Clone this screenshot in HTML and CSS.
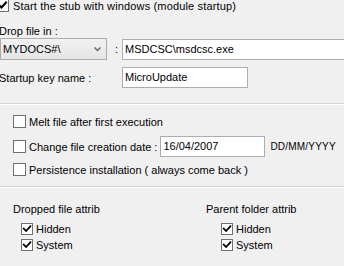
FILE: index.html
```html
<!DOCTYPE html>
<html>
<head>
<meta charset="utf-8">
<link rel="stylesheet" href="styles.css">
</head>
<body>
<div class="panel">
  <div class="row top-row">
    <span class="cb-clip"><span class="cb checked"><svg viewBox="0 0 11 11" width="11" height="11"><path d="M2 5 L4.5 7.5 L9 2.5" /></svg></span></span>
    <span class="lbl">Start the stub with windows (module startup)</span>
  </div>
  <div class="field-label drop-label">Drop file in :</div>
  <div class="row combo-row">
    <div class="combo"><span>MYDOCS#\</span><svg class="arrow" viewBox="0 0 7 5" width="7" height="5"><path d="M0.5 0.5 L3.5 3.5 L6.5 0.5" /></svg></div>
    <span class="colon">:</span>
    <div class="tb tb-path">MSDCSC\msdcsc.exe</div>
  </div>
  <div class="row key-row">
    <span class="key-label">Startup key name :</span>
    <div class="tb tb-key">MicroUpdate</div>
  </div>
  <div class="sep sep1"></div>
  <div class="options">
    <div class="row opt-row">
      <span class="cb"></span><span class="lbl">Melt file after first execution</span>
    </div>
    <div class="row opt-row date-row">
      <span class="cb"></span><span class="lbl">Change file creation date :</span>
      <div class="tb tb-date">16/04/2007</div>
      <span class="fmt">DD/MM/YYYY</span>
    </div>
    <div class="row opt-row">
      <span class="cb"></span><span class="lbl">Persistence installation ( always come back )</span>
    </div>
  </div>
  <div class="sep sep2"></div>
  <div class="attribs">
    <div class="group group-left">
      <div class="group-title">Dropped file attrib</div>
      <div class="row attr-row"><span class="cb small checked"><svg viewBox="0 0 10 10" width="10" height="10"><path d="M1.8 4.6 L4 7 L8.4 2.2" /></svg></span><span class="lbl">Hidden</span></div>
      <div class="row attr-row"><span class="cb small checked"><svg viewBox="0 0 10 10" width="10" height="10"><path d="M1.8 4.6 L4 7 L8.4 2.2" /></svg></span><span class="lbl">System</span></div>
    </div>
    <div class="group group-right">
      <div class="group-title">Parent folder attrib</div>
      <div class="row attr-row"><span class="cb small checked"><svg viewBox="0 0 10 10" width="10" height="10"><path d="M1.8 4.6 L4 7 L8.4 2.2" /></svg></span><span class="lbl">Hidden</span></div>
      <div class="row attr-row"><span class="cb small checked"><svg viewBox="0 0 10 10" width="10" height="10"><path d="M1.8 4.6 L4 7 L8.4 2.2" /></svg></span><span class="lbl">System</span></div>
    </div>
  </div>
</div>
</body>
</html>
```
FILE: styles.css
```css
html, body {
  margin: 0;
  padding: 0;
  background: #f0f0f0;
  overflow: hidden;
}
body {
  width: 344px;
  height: 266px;
  font-family: "Liberation Sans", Arial, sans-serif;
  font-size: 11px;
  color: #000;
}
.panel {
  display: flex;
  flex-direction: column;
}
.row {
  display: flex;
  align-items: center;
}
.cb {
  box-sizing: border-box;
  width: 13px;
  height: 13px;
  border: 1px solid #707070;
  background: #fff;
  display: flex;
  align-items: center;
  justify-content: center;
  flex: none;
}
.cb.small {
  width: 12px;
  height: 12px;
}
.cb svg path {
  fill: none;
  stroke: #000;
  stroke-width: 2;
  stroke-linecap: square;
}
.cb.small svg path {
  stroke-width: 1.8;
}
.cb-clip {
  flex: none;
  width: 9px;
  height: 12px;
  overflow: hidden;
  display: flex;
  justify-content: flex-end;
  align-items: flex-end;
}
.lbl {
  margin-left: 3px;
  white-space: nowrap;
}
.top-row {
  height: 12px;
}
.top-row .lbl {
  margin-left: 4px;
  letter-spacing: 0.15px;
}
.drop-label {
  margin-top: 12px;
  height: 14px;
  line-height: 14px;
  text-indent: -1px;
}
.combo-row {
  height: 22px;
}
.combo {
  box-sizing: border-box;
  flex: none;
  width: 107px;
  height: 22px;
  border: 1px solid #acacac;
  background: linear-gradient(#f2f2f2, #e5e5e5);
  display: flex;
  align-items: center;
  justify-content: space-between;
  padding: 0 5px 0 2px;
}
.arrow path {
  fill: none;
  stroke: #666;
  stroke-width: 1.5;
}
.colon {
  flex: none;
  margin-left: 8px;
  width: 7px;
}
.tb {
  box-sizing: border-box;
  height: 21px;
  border: 1px solid #abadb3;
  background: #fff;
  padding: 0 2px;
  line-height: 19px;
  white-space: nowrap;
  flex: none;
}
.tb-path {
  flex: 1;
  border-right: none;
}
.key-row {
  margin-top: 7px;
  height: 21px;
}
.key-label {
  flex: none;
  width: 122px;
  text-indent: -1px;
}
.tb-key {
  width: 126px;
}
.sep {
  height: 1px;
  background: #d5d5d5;
  border-bottom: 1px solid #fff;
}
.sep1 {
  margin-top: 15px;
}
.options {
  display: flex;
  flex-direction: column;
  padding-left: 13px;
  padding-top: 10px;
}
.opt-row {
  height: 13px;
}
.date-row {
  height: 21px;
  margin-top: 8px;
}
.date-row + .opt-row {
  margin-top: 6px;
}
.tb-date {
  width: 105px;
  margin-left: 3px;
}
.fmt {
  margin-left: 5px;
  font-size: 10px;
  letter-spacing: 0.2px;
}
.sep2 {
  margin-top: 10px;
}
.attribs {
  display: flex;
  padding-top: 14px;
}
.group {
  display: flex;
  flex-direction: column;
}
.group-left {
  margin-left: 13px;
  width: 193px;
}
.group-title {
  height: 14px;
  line-height: 14px;
}
.attr-row {
  margin-left: 8px;
  height: 12px;
  margin-top: 4px;
}
.group-title + .attr-row {
  margin-top: 7px;
}
.group-right .attr-row {
  margin-left: 15px;
}
```
